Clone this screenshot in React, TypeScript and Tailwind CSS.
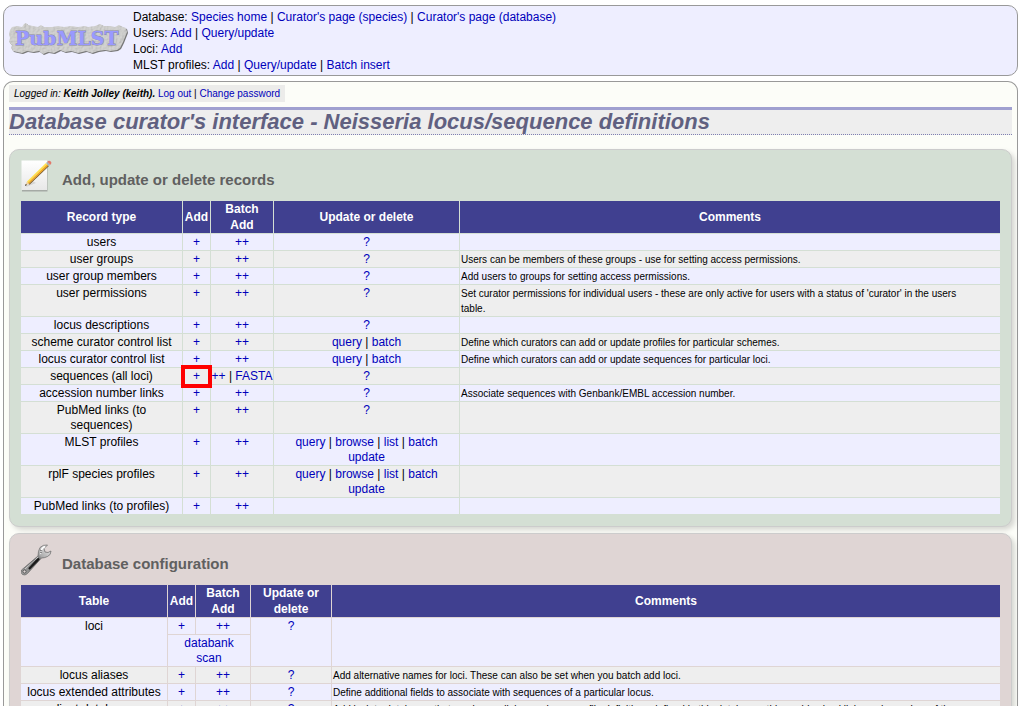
import type { ReactNode } from "react";

function Link({ children }: { children: ReactNode }) {
  return (
    <a href="#" className="text-[#0000bb] hover:underline">
      {children}
    </a>
  );
}

function Links({ items }: { items: string[] }) {
  return (
    <>
      {items.map((item, i) => (
        <span key={item}>
          {i > 0 && " | "}
          <Link>{item}</Link>
        </span>
      ))}
    </>
  );
}

const slab =
  "M1 14L2 10 4 7 9 6 14 7 16 4 18 3 20 5 25 6 30 7 33 5 36 7 44 7 50 6 56 7 63 6 70 7 77 6 80 7 87 6 92 4 96 6 102 6 107 7 111 5 115 7 118 8 119 12 117 17 115 22 112 28 109 30 102 31 97 30 90 31 84 33 78 31 70 33 63 31 57 32 52 30 46 33 40 32 35 34 31 31 25 32 19 31 14 33 9 32 5 31 3 28 4 25 1 22 2 18z";

function Logo() {
  return (
    <svg viewBox="1 0 122 36" className="h-9 w-[122px] shrink-0" role="img" aria-label="PubMLST">
      <defs>
        <filter id="stone" x="0" y="0" width="100%" height="100%">
          <feTurbulence type="fractalNoise" baseFrequency="0.45" numOctaves="3" seed="4" result="noise" />
          <feDiffuseLighting in="noise" surfaceScale="0.8" lightingColor="#d6d6d4" result="lit">
            <feDistantLight azimuth="225" elevation="66" />
          </feDiffuseLighting>
          <feComposite in="lit" in2="SourceGraphic" operator="in" />
        </filter>
      </defs>
      <path d={slab} fill="#777" transform="translate(1 1)" />
      <path d={slab} fill="#c8c8c6" filter="url(#stone)" />
      <g fontFamily="'DejaVu Serif', serif" fontWeight="700" fontSize="19">
        <text x="7" y="25" fill="#9999ff" stroke="#8888a8" strokeWidth="0.8" paintOrder="stroke">
          PubMLST
        </text>
      </g>
    </svg>
  );
}

function NoteIcon() {
  return (
    <svg viewBox="0 0 32 33" className="h-[33px] w-8 shrink-0" aria-hidden="true">
      <defs>
        <linearGradient id="sheet" x1="0" y1="0" x2="0" y2="1">
          <stop offset="0" stopColor="#fff" />
          <stop offset="1" stopColor="#e8e8e8" />
        </linearGradient>
      </defs>
      <rect x="1" y="2" width="25.500" height="29.500" fill="#a5aaa5" />
      <rect x="0.500" y="0.500" width="25.500" height="29.500" fill="url(#sheet)" />
      <path d="M5 27L10 20 15 23z" fill="#777" opacity="0.2" />
      <path d="M4 26l2-4.500 2 2z" fill="#edcf9c" />
      <path d="M4 26l.8-2 1.200 1z" fill="#222" />
      <path d="M6 21.500L25 3l1.200 1.200L7 22.700z" fill="#ffe04a" />
      <path d="M7 22.700L26.200 4.200 27.400 5.400 8 24z" fill="#f2a81c" />
      <path d="M8 24L27.400 5.400l.6.700L8.400 24.800z" fill="#76501a" />
      <path d="M25 3l1.300-1.300L29.200 4.700 28 6z" fill="#a9b2b8" />
      <path d="M26.300 1.700q1.700-1.700 3.200-.4t.6 2.600l-.9.800z" fill="#e2786a" />
    </svg>
  );
}

function WrenchIcon() {
  return (
    <svg viewBox="0 0 32 33" className="h-[33px] w-8 shrink-0" aria-hidden="true">
      <defs>
        <linearGradient id="steel" x1="0" y1="1" x2="1" y2="0">
          <stop offset="0" stopColor="#aaa" />
          <stop offset="0.25" stopColor="#888" />
          <stop offset="0.5" stopColor="#444" />
          <stop offset="0.65" stopColor="#aaa" />
          <stop offset="1" stopColor="#f2f2f2" />
        </linearGradient>
      </defs>
      <path
        d="M.5 26L17 12Q17 7 19 3.500Q22 .5 26.500 1L23 4.500L24 8L27 8.500L30 7Q30 11 26.500 12.500Q23.500 14 20.500 14L6.500 29.500Q4 32 1.500 30.500Q-1 28.500 .5 26z"
        fill="url(#steel)"
        stroke="#666"
        strokeWidth="0.7"
      />
      <path d="M4 25L17 13" stroke="#ccc" strokeWidth="1" />
      <path d="M8 25L18 14.500" stroke="#1a1a1a" strokeWidth="2" />
      <path d="M20 10q-1-5 4-7.500" stroke="#fff" strokeWidth="1.500" fill="none" />
      <path d="M19 6l2 1m-2 1l2 1" stroke="#444" strokeWidth="0.8" />
      <circle cx="3.500" cy="27.500" r="1.600" fill="#ddd5d5" stroke="#444" strokeWidth="0.8" />
    </svg>
  );
}

const headCell = "bg-[#404090] p-0 text-center font-bold whitespace-pre-line text-white";
const cell = "p-0 pt-px text-center align-top";
const nameCell = "px-1 pt-px text-center align-top";
const noteCell = "pt-px pl-px pr-7 text-left align-top text-[10px]";

function Panel({ tone, icon, title, children }: { tone: string; icon: ReactNode; title: string; children: ReactNode }) {
  return (
    <section className={`mb-1.5 rounded-[10px] border border-[#ccc] px-2.5 pb-[11px] shadow-[3px_3px_5px_rgba(0,0,0,0.15)] ${tone}`}>
      <div className="flex h-[50px] items-start gap-[9px] pt-2.5 pl-px">
        {icon}
        <h2 className="pt-2.5 text-[15px] leading-5 font-bold text-[#606060]">{title}</h2>
      </div>
      {children}
    </section>
  );
}

function HeadRow({ labels }: { labels: string[] }) {
  return (
    <thead>
      <tr className="h-8 leading-4">
        {labels.map((label) => (
          <th key={label} scope="col" className={headCell}>
            {label}
          </th>
        ))}
      </tr>
    </thead>
  );
}

interface Row {
  name: string;
  batch?: string[];
  update?: string[];
  note?: string;
  marked?: boolean;
}

const records: Row[] = [
  { name: "users", update: ["?"] },
  { name: "user groups", update: ["?"], note: "Users can be members of these groups - use for setting access permissions." },
  { name: "user group members", update: ["?"], note: "Add users to groups for setting access permissions." },
  {
    name: "user permissions",
    update: ["?"],
    note: "Set curator permissions for individual users - these are only active for users with a status of 'curator' in the users table.",
  },
  { name: "locus descriptions", update: ["?"] },
  { name: "scheme curator control list", update: ["query", "batch"], note: "Define which curators can add or update profiles for particular schemes." },
  { name: "locus curator control list", update: ["query", "batch"], note: "Define which curators can add or update sequences for particular loci." },
  { name: "sequences (all loci)", batch: ["++", "FASTA"], update: ["?"], marked: true },
  { name: "accession number links", update: ["?"], note: "Associate sequences with Genbank/EMBL accession number." },
  { name: "PubMed links (to sequences)", update: ["?"] },
  { name: "MLST profiles", update: ["query", "browse", "list", "batch update"] },
  { name: "rplF species profiles", update: ["query", "browse", "list", "batch update"] },
  { name: "PubMed links (to profiles)" },
];

const config: Row[] = [
  { name: "locus aliases", update: ["?"], note: "Add alternative names for loci. These can also be set when you batch add loci." },
  { name: "locus extended attributes", update: ["?"], note: "Define additional fields to associate with sequences of a particular locus." },
  {
    name: "client databases",
    update: ["?"],
    note: "Add isolate databases that use locus allele or scheme profile definitions defined in this database - this enables backlinks and searches of these databases when you query sequences or profiles in this database.",
  },
];

function DataRow({ row, shade }: { row: Row; shade: string }) {
  return (
    <tr className={`h-4 ${shade}`}>
      <td className={nameCell}>{row.name}</td>
      <td className={`relative ${cell}`}>
        <Link>+</Link>
        {row.marked && (
          <span className="pointer-events-none absolute -inset-x-0.5 -top-[3px] -bottom-1 border-4 border-[#ff0000]" />
        )}
      </td>
      <td className={cell}>
        <Links items={row.batch ?? ["++"]} />
      </td>
      <td className={`px-1 ${cell}`}>
        <Links items={row.update ?? []} />
      </td>
      <td className={noteCell}>{row.note}</td>
    </tr>
  );
}

const tableStyle = "w-full table-fixed border-separate border-spacing-px text-xs leading-[15px]";

export default function App() {
  return (
    <div className="flex h-screen flex-col overflow-hidden bg-white px-[3px] pt-[5px] font-['Liberation_Sans',Arial,sans-serif] text-xs text-black">
      <header className="mb-[5px] flex h-[71px] shrink-0 rounded-[10px] border border-[#999] bg-[#eeeeff] pl-[5px]">
        <div className="flex w-[124px] items-start pt-[14px]">
          <Logo />
        </div>
        <nav className="pt-[3px] leading-4" aria-label="Curator links">
          <div>
            Database: <Links items={["Species home", "Curator's page (species)", "Curator's page (database)"]} />
          </div>
          <div>
            Users: <Links items={["Add", "Query/update"]} />
          </div>
          <div>
            Loci: <Links items={["Add"]} />
          </div>
          <div>
            MLST profiles: <Links items={["Add", "Query/update", "Batch insert"]} />
          </div>
        </nav>
      </header>

      <main className="shrink-0 rounded-t-[10px] border border-b-0 border-[#999] bg-[#fcfdf8] px-[5px] pt-[3px]">
        <p className="mb-[5px] w-fit bg-[#ececea] px-[5px] text-[10px] leading-[17px]">
          <i>
            Logged in: <b>Keith Jolley (keith).</b>
          </i>{" "}
          <Links items={["Log out", "Change password"]} />
        </p>
        <h1 className="mb-3.5 border-t-[3px] border-b border-t-[#a0a0d0] border-b-[#8080b0] bg-[#eeeeee] text-[22px] leading-6 font-bold text-[#606080] italic [border-bottom-style:dotted]">
          Database curator's interface - Neisseria locus/sequence definitions
        </h1>

        <Panel tone="bg-[#d4dfd4]" icon={<NoteIcon />} title="Add, update or delete records">
          <table className={tableStyle}>
            <colgroup>
              <col className="w-[161px]" />
              <col className="w-[27px]" />
              <col className="w-[62px]" />
              <col className="w-[185px]" />
              <col />
            </colgroup>
            <HeadRow labels={["Record type", "Add", "Batch\nAdd", "Update or delete", "Comments"]} />
            <tbody>
              {records.map((row, i) => (
                <DataRow key={row.name} row={row} shade={i % 2 ? "bg-[#eeeeee]" : "bg-[#eeeeff]"} />
              ))}
            </tbody>
          </table>
        </Panel>

        <Panel tone="bg-[#dfd5d4]" icon={<WrenchIcon />} title="Database configuration">
          <table className={tableStyle}>
            <colgroup>
              <col className="w-[146px]" />
              <col className="w-[27px]" />
              <col className="w-[54px]" />
              <col className="w-[80px]" />
              <col />
            </colgroup>
            <HeadRow labels={["Table", "Add", "Batch\nAdd", "Update or\ndelete", "Comments"]} />
            <tbody>
              <tr className="h-4 bg-[#eeeeff]">
                <td rowSpan={2} className={nameCell}>
                  loci
                </td>
                <td className={cell}>
                  <Link>+</Link>
                </td>
                <td className={cell}>
                  <Link>++</Link>
                </td>
                <td rowSpan={2} className={cell}>
                  <Link>?</Link>
                </td>
                <td rowSpan={2} className={noteCell} />
              </tr>
              <tr className="bg-[#eeeeff]">
                <td colSpan={2} className={nameCell}>
                  <Link>databank scan</Link>
                </td>
              </tr>
              {config.map((row, i) => (
                <DataRow key={row.name} row={row} shade={i % 2 ? "bg-[#eeeeff]" : "bg-[#eeeeee]"} />
              ))}
            </tbody>
          </table>
        </Panel>
      </main>
    </div>
  );
}
